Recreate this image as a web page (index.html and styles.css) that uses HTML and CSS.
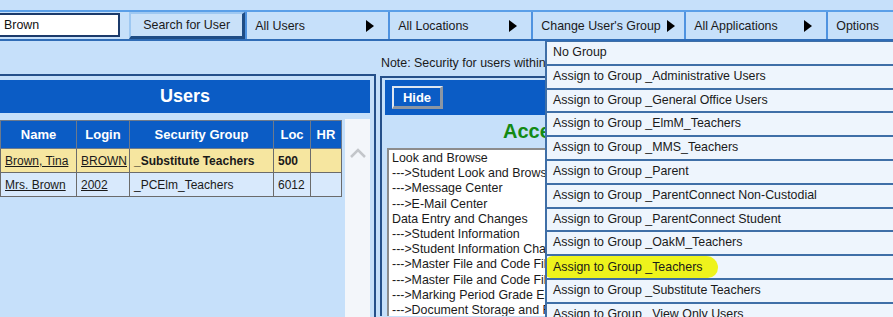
FILE: index.html
```html
<!DOCTYPE html>
<html lang="en">
<head>
    <meta charset="UTF-8">
    <title>User Security</title>
    <link rel="stylesheet" href="styles.css">
</head>
<body>
    <div class="top-strip"></div>

    <div class="toolbar">
        <input class="search-box" type="text" value="Brown">
        <button class="search-btn">Search for User</button>
        <div class="menu-item w-users">All Users<span class="arrow"></span></div>
        <div class="menu-item w-locations">All Locations<span class="arrow"></span></div>
        <div class="menu-item w-group">Change User's Group<span class="arrow"></span></div>
        <div class="menu-item w-apps">All Applications<span class="arrow"></span></div>
        <div class="menu-item w-options">Options</div>
    </div>

    <div class="main">
        <div class="note">Note: Security for users within this group is controlled by the group settings.</div>

        <div class="panels">
            <!-- left: users found by the search -->
            <div class="users-panel">
                <div class="panel-header">Users</div>
                <div class="users-body">
                    <table class="users-table">
                        <thead>
                            <tr>
                                <th class="c-name">Name</th>
                                <th class="c-login">Login</th>
                                <th class="c-group">Security Group</th>
                                <th class="c-loc">Loc</th>
                                <th class="c-hr">HR</th>
                            </tr>
                        </thead>
                        <tbody>
                            <tr class="current">
                                <td><a href="#">Brown, Tina</a></td>
                                <td><a href="#">BROWN</a></td>
                                <td class="strong">_Substitute Teachers</td>
                                <td class="strong">500</td>
                                <td></td>
                            </tr>
                            <tr>
                                <td><a href="#">Mrs. Brown</a></td>
                                <td><a href="#">2002</a></td>
                                <td>_PCElm_Teachers</td>
                                <td>6012</td>
                                <td></td>
                            </tr>
                        </tbody>
                    </table>
                    <div class="scroll-col">
                        <svg class="chevron" width="18" height="10" viewBox="0 0 18 10">
                            <path d="M2 9 L9 2 L16 9" fill="none" stroke="#c3c6ca" stroke-width="2.5"/>
                        </svg>
                    </div>
                </div>
            </div>

            <!-- right: access rights -->
            <div class="access-panel">
                <div class="access-bar">
                    <button class="hide-btn">Hide</button>
                </div>
                <div class="access-title">Access Rights</div>
                <div class="access-list">
                    <div>Look and Browse</div>
                    <div>---&gt;Student Look and Browse</div>
                    <div>---&gt;Message Center</div>
                    <div>---&gt;E-Mail Center</div>
                    <div>Data Entry and Changes</div>
                    <div>---&gt;Student Information</div>
                    <div>---&gt;Student Information Changes</div>
                    <div>---&gt;Master File and Code Files</div>
                    <div>---&gt;Master File and Code Files</div>
                    <div>---&gt;Marking Period Grade Entry</div>
                    <div>---&gt;Document Storage and Retrieval</div>
                </div>
            </div>
        </div>
    </div>

    <!-- open submenu of "Change User's Group" -->
    <div class="dropdown">
        <div class="drop-item">No Group</div>
        <div class="drop-item">Assign to Group _Administrative Users</div>
        <div class="drop-item">Assign to Group _General Office Users</div>
        <div class="drop-item">Assign to Group _ElmM_Teachers</div>
        <div class="drop-item">Assign to Group _MMS_Teachers</div>
        <div class="drop-item">Assign to Group _Parent</div>
        <div class="drop-item">Assign to Group _ParentConnect Non-Custodial</div>
        <div class="drop-item">Assign to Group _ParentConnect Student</div>
        <div class="drop-item">Assign to Group _OakM_Teachers</div>
        <div class="drop-item"><span class="marker">Assign to Group _Teachers</span></div>
        <div class="drop-item">Assign to Group _Substitute Teachers</div>
        <div class="drop-item">Assign to Group _View Only Users</div>
    </div>
</body>
</html>
```

FILE: styles.css
```css
body {
    margin: 0;
    width: 893px;
    height: 317px;
    overflow: hidden;
    position: relative;
    font-family: "Liberation Sans", Arial, sans-serif;
    font-size: 12px;
    color: #1a1a1a;
    background-color: #c6e0fa;
}

.top-strip {
    height: 10px;
}

/* toolbar */
.toolbar {
    display: flex;
    height: 27px;
    border-top: 2px solid #5a9fe8;
    border-bottom: 2px solid #2f6cb6;
}

.search-box {
    box-sizing: border-box;
    width: 124px;
    height: 24px;
    margin: 1px 9px 0 -4px;
    padding: 0 0 0 6px;
    border: 2px solid #1b3a6b;
    font-family: inherit;
    font-size: 12.4px;
    color: #111;
    background: white;
    outline: none;
}

.search-btn {
    box-sizing: border-box;
    width: 119px;
    height: 27px;
    margin: 0;
    padding: 0;
    border-style: solid;
    border-width: 2px 3px 3px 2px;
    border-color: #9ec8f2 #1f4d85 #1f4d85 #9ec8f2;
    background-color: #c9e1f9;
    font-family: inherit;
    font-size: 12.4px;
    color: #1a1a1a;
}

.menu-item {
    box-sizing: border-box;
    flex-shrink: 0;
    display: flex;
    align-items: center;
    justify-content: space-between;
    padding: 0 14px 0 8px;
    border-left: 2px solid #4f93e0;
    font-size: 12.4px;
}

.w-users { width: 143px; }
.w-locations { width: 143px; }
.w-group { width: 153px; padding-right: 9px; }
.w-apps { width: 142px; }
.w-options { flex: 1; }

.arrow {
    width: 0;
    height: 0;
    border-left: 8px solid #000;
    border-top: 6px solid transparent;
    border-bottom: 6px solid transparent;
}

/* main area */
.note {
    height: 33px;
    box-sizing: border-box;
    padding: 15px 0 0 381px;
    white-space: nowrap;
    font-size: 12.4px;
}

.panels {
    display: flex;
    gap: 4px;
    margin-left: -6px;
    align-items: flex-start;
}

.users-panel {
    flex-shrink: 0;
    width: 370px;
    height: 240px;
    padding: 4px 4px 0 4px;
    border: 2px solid #25508a;
    border-bottom: none;
}

.panel-header {
    height: 33px;
    line-height: 33px;
    text-align: center;
    background-color: #0b5cc5;
    color: white;
    font-size: 18px;
    font-weight: bold;
}

.users-body {
    display: flex;
    gap: 3px;
    margin-top: 6px;
    height: 200px;
}

.users-table {
    border-collapse: collapse;
    align-self: flex-start;
    margin-top: 1px;
}

.users-table th {
    height: 27px;
    padding: 0;
    background-color: #0b5cc5;
    color: white;
    font-size: 13px;
    font-weight: bold;
    border: 1px solid #6d7a8c;
}

.users-table td {
    height: 23px;
    padding: 0 0 0 4px;
    border: 1px solid #6b6b6b;
    white-space: nowrap;
    background-color: #d8e9fc;
}

.users-table tr.current td {
    background-color: #f6e6a0;
}

.users-table td.strong {
    font-weight: bold;
}

.users-table a {
    color: #1a1a1a;
}

.c-name { width: 75px; }
.c-login { width: 52px; }
.c-group { width: 143px; }
.c-loc { width: 36px; }
.c-hr { width: 30px; }

.scroll-col {
    flex: 1;
    align-self: stretch;
    background-color: #f3f6fa;
    text-align: center;
    padding-top: 28px;
}

.chevron {
    display: inline-block;
}

/* access rights */
.access-panel {
    flex: 1;
    height: 236px;
    margin-top: 2px;
    padding: 2px 0 0 3px;
    border-left: 2px solid #25508a;
    border-top: 2px solid #25508a;
    overflow: hidden;
}

.access-bar {
    height: 35px;
    box-sizing: border-box;
    padding: 6px 0 0 7px;
    background-color: #0b5cc5;
}

.hide-btn {
    box-sizing: border-box;
    width: 51px;
    height: 23px;
    padding: 0;
    border-style: solid;
    border-width: 2px 3px 3px 2px;
    border-color: #dfe7f1 #8c96a3 #8c96a3 #dfe7f1;
    background-color: #0b5cc5;
    color: white;
    font-family: inherit;
    font-size: 13px;
    font-weight: bold;
}

.access-title {
    height: 33px;
    line-height: 33px;
    padding-left: 118px;
    color: #138a14;
    font-size: 20px;
    font-weight: bold;
}

.access-list {
    margin-left: 2px;
    height: 200px;
    padding: 1px 0 0 3px;
    border: 2px solid #8c8c8c;
    background: white;
    font-size: 12.4px;
    line-height: 15.2px;
    white-space: nowrap;
}

/* dropdown submenu */
.dropdown {
    position: absolute;
    left: 545px;
    top: 41px;
    right: 0;
    bottom: 0;
    overflow: hidden;
    border-left: 2px solid #3f6fa7;
    border-top: 1px solid #3f6fa7;
}

.drop-item {
    height: 21.8px;
    line-height: 21.8px;
    padding-left: 6px;
    background-color: #eef5fd;
    border-bottom: 2px solid #3f6fa7;
    white-space: nowrap;
    font-size: 12.4px;
}

.marker {
    display: inline-block;
    height: 22px;
    line-height: 22px;
    margin-left: -8px;
    padding: 0 16px 0 8px;
    border-radius: 9px 14px 12px 7px;
    background-color: #eef31c;
}
```
